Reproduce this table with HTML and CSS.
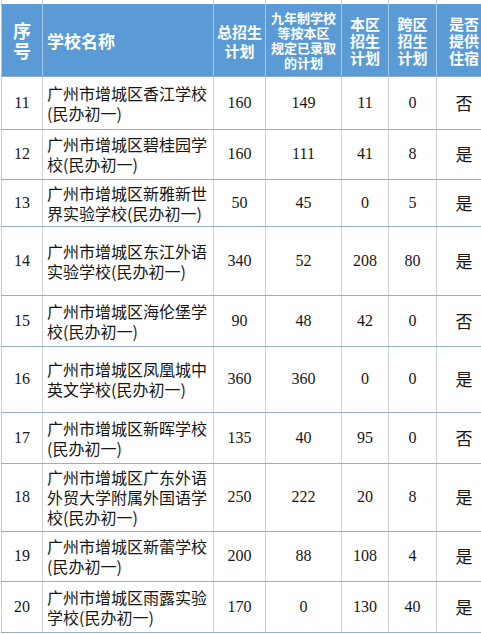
FILE: index.html
```html
<!DOCTYPE html>
<html lang="zh-CN">
<head>
<meta charset="utf-8">
<title>学校招生计划</title>
<link rel="stylesheet" href="styles.css">
</head>
<body>
<table class="plan">
  <colgroup>
    <col class="c-no"><col class="c-name"><col class="c-total"><col class="c-nine"><col class="c-local"><col class="c-cross"><col class="c-board">
  </colgroup>
  <tr class="stub"><td></td><td></td><td></td><td></td><td></td><td></td><td></td></tr>
  <tr class="head">
    <th class="h-no">序<br>号</th>
    <th class="h-name">学校名称</th>
    <th class="h-total">总招生<br>计划</th>
    <th class="h-nine">九年制学校<br>等按本区<br>规定已录取<br>的计划</th>
    <th class="h-small">本区<br>招生<br>计划</th>
    <th class="h-small">跨区<br>招生<br>计划</th>
    <th class="h-small">是否<br>提供<br>住宿</th>
  </tr>
  <tr class="r53"><td class="num">11</td><td class="name">广州市增城区香江学校(民办初一)</td><td class="num">160</td><td class="num">149</td><td class="num">11</td><td class="num">0</td><td class="yn">否</td></tr>
  <tr class="r50"><td class="num">12</td><td class="name">广州市增城区碧桂园学校(民办初一)</td><td class="num">160</td><td class="num">111</td><td class="num">41</td><td class="num">8</td><td class="yn">是</td></tr>
  <tr class="r47"><td class="num">13</td><td class="name">广州市增城区新雅新世界实验学校(民办初一)</td><td class="num">50</td><td class="num">45</td><td class="num">0</td><td class="num">5</td><td class="yn">是</td></tr>
  <tr class="r69"><td class="num">14</td><td class="name">广州市增城区东江外语实验学校(民办初一)</td><td class="num">340</td><td class="num">52</td><td class="num">208</td><td class="num">80</td><td class="yn">是</td></tr>
  <tr class="r51"><td class="num">15</td><td class="name">广州市增城区海伦堡学校(民办初一)</td><td class="num">90</td><td class="num">48</td><td class="num">42</td><td class="num">0</td><td class="yn">否</td></tr>
  <tr class="r66"><td class="num">16</td><td class="name">广州市增城区凤凰城中英文学校(民办初一)</td><td class="num">360</td><td class="num">360</td><td class="num">0</td><td class="num">0</td><td class="yn">是</td></tr>
  <tr class="r51"><td class="num">17</td><td class="name">广州市增城区新晖学校(民办初一)</td><td class="num">135</td><td class="num">40</td><td class="num">95</td><td class="num">0</td><td class="yn">否</td></tr>
  <tr class="r68"><td class="num">18</td><td class="name">广州市增城区广东外语外贸大学附属外国语学校(民办初一)</td><td class="num">250</td><td class="num">222</td><td class="num">20</td><td class="num">8</td><td class="yn">是</td></tr>
  <tr class="r50"><td class="num">19</td><td class="name">广州市增城区新蕾学校(民办初一)</td><td class="num">200</td><td class="num">88</td><td class="num">108</td><td class="num">4</td><td class="yn">是</td></tr>
  <tr class="r51"><td class="num">20</td><td class="name">广州市增城区雨露实验学校(民办初一)</td><td class="num">170</td><td class="num">0</td><td class="num">130</td><td class="num">40</td><td class="yn">是</td></tr>
</table>
</body>
</html>
```

FILE: styles.css
```css
html, body {
  margin: 0;
  padding: 0;
  background: #ffffff;
  overflow: hidden;
}

.plan {
  margin-left: 1px;
  width: 490px;
  border-collapse: collapse;
  table-layout: fixed;
  font-family: "Noto Sans CJK SC", "Noto Sans", sans-serif;
  color: #161616;
}

.c-no { width: 41px; }
.c-name { width: 171px; }
.c-total { width: 52px; }
.c-nine { width: 76px; }
.c-local { width: 47px; }
.c-cross { width: 48px; }
.c-board { width: 55px; }

.plan td, .plan th {
  padding: 0;
  border-left: 1px solid #cdd2d6;
  border-right: 1px solid #cdd2d6;
}

.plan td {
  border-bottom: 1px solid #94aec3;
  text-align: center;
  vertical-align: middle;
  font-size: 16px;
  line-height: 20px;
}

.stub { height: 4px; }
.plan .stub td { border-bottom: none; }

.head { height: 72px; }

.plan th {
  background: #5b9bd5;
  color: #ffffff;
  font-weight: 700;
  text-align: center;
  vertical-align: middle;
  border-left-color: #a9c9e8;
  border-right-color: #a9c9e8;
  border-bottom: 1px solid #94aec3;
}

.plan th.h-no { font-size: 18px; line-height: 20px; }
.plan th.h-name { font-size: 17px; line-height: 20px; text-align: left; padding-left: 4px; padding-top: 3px; }
.plan th.h-total { font-size: 15px; line-height: 19px; padding-top: 3px; }
.plan th.h-nine { font-size: 13px; line-height: 15px; }
.plan th.h-small { font-size: 15px; line-height: 17px; padding-top: 2px; }

.plan td.num {
  font-family: "Liberation Serif", serif;
  font-size: 16px;
}

.plan td.name {
  text-align: left;
  padding-left: 4px;
  padding-right: 3px;
}

.plan td.yn {
  font-size: 17px;
}

.r47 { height: 47px; }
.r50 { height: 50px; }
.r51 { height: 51px; }
.r53 { height: 53px; }
.r66 { height: 66px; }
.r68 { height: 68px; }
.r69 { height: 69px; }
```
